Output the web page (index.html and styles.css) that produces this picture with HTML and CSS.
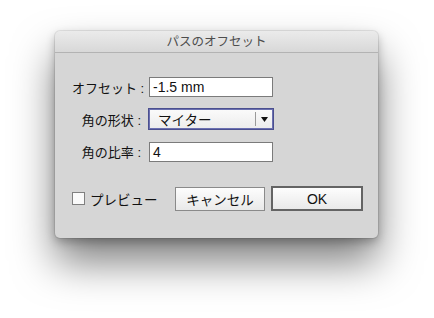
FILE: index.html
```html
<!DOCTYPE html>
<html lang="ja">
  <head>
    <meta charset="utf-8">
    <title>パスのオフセット</title>
    <link rel="stylesheet" href="styles.css">
  </head>
  <body>
    <div class="dialog">
      <div class="titlebar">パスのオフセット</div>
      <div class="dialog-body">
        <div class="form-grid">
          <label class="field-label">オフセット :</label>
          <div class="text-field">-1.5 mm</div>

          <label class="field-label">角の形状 :</label>
          <div class="select-field">
            <span class="select-value">マイター</span>
            <span class="select-arrow">
              <svg width="7" height="5" viewBox="0 0 7 5"><path d="M0 0h7L3.5 5z" fill="#111"/></svg>
            </span>
          </div>

          <label class="field-label">角の比率 :</label>
          <div class="text-field">4</div>
        </div>

        <div class="button-row">
          <label class="preview">
            <span class="checkbox"></span>
            <span>プレビュー</span>
          </label>
          <button class="btn">キャンセル</button>
          <button class="btn btn-default">OK</button>
        </div>
      </div>
    </div>
  </body>
</html>
```

FILE: styles.css
```css
html {
  height: 100%;
  background: #ffffff;
}

body {
  margin: 0;
  min-height: 100%;
  box-sizing: border-box;
  padding: 31px 0 0 55px;
  font-family: "Liberation Sans", "Noto Sans CJK JP", sans-serif;
  font-size: 13px;
  color: #111;
}

.dialog {
  width: 323px;
  height: 207px;
  background: #d6d6d6;
  border-radius: 5px;
  box-shadow: 0 0 0 1px rgba(0, 0, 0, 0.08), 0 4px 10px rgba(0, 0, 0, 0.25), 0 24px 42px rgba(0, 0, 0, 0.5);
  overflow: hidden;
  display: flex;
  flex-direction: column;
}

.titlebar {
  height: 21px;
  line-height: 22px;
  text-align: center;
  font-size: 12.5px;
  color: #4d4d4d;
  background: linear-gradient(#ebebeb, #d8d8d8);
  border-bottom: 1px solid #b3b3b3;
}

.dialog-body {
  padding: 24px 15px 0 17px;
}

.form-grid {
  display: grid;
  grid-template-columns: 73px 126px;
  column-gap: 3px;
  row-gap: 11px;
  align-items: center;
}

.field-label {
  text-align: right;
  white-space: nowrap;
  font-size: 13px;
  margin-right: 4px;
}

.text-field {
  height: 18px;
  margin: 0 1px;
  line-height: 19px;
  padding: 0 3px;
  background: #fff;
  border: 1px solid #7b7b7b;
  font-size: 14px;
}

.text-field:last-child {
  margin-top: 1px;
}

.select-field {
  height: 20px;
  display: flex;
  align-items: center;
  background: linear-gradient(#fbfbfb, #ececec);
  border: 1px solid #4b4f8f;
  box-shadow: inset 0 0 0 1px #6b70b0;
}

.select-value {
  flex: 1;
  padding-left: 9px;
  font-size: 13.5px;
}

.select-arrow {
  width: 16px;
  height: 14px;
  border-left: 1px solid #9a9a9a;
  display: flex;
  align-items: center;
  justify-content: center;
  margin-right: 1px;
}

.button-row {
  display: flex;
  align-items: center;
  margin-top: 24px;
}

.preview {
  display: flex;
  align-items: center;
  gap: 5px;
  white-space: nowrap;
  font-size: 13.5px;
  width: 97px;
  flex-shrink: 0;
}

.checkbox {
  width: 11px;
  height: 11px;
  background: #fafafa;
  border: 1px solid #808080;
}

.btn {
  font-family: inherit;
  font-size: 13.5px;
  color: #111;
  width: 90px;
  height: 24px;
  padding: 0;
  flex-shrink: 0;
  background: linear-gradient(#fdfdfd, #e9e9e9);
  border: 1px solid #8a8a8a;
  margin-left: 6px;
  margin-right: 0;
}

.btn-default {
  width: 92px;
  height: 25px;
  border: 2px solid #646464;
  font-size: 14px;
}
```
